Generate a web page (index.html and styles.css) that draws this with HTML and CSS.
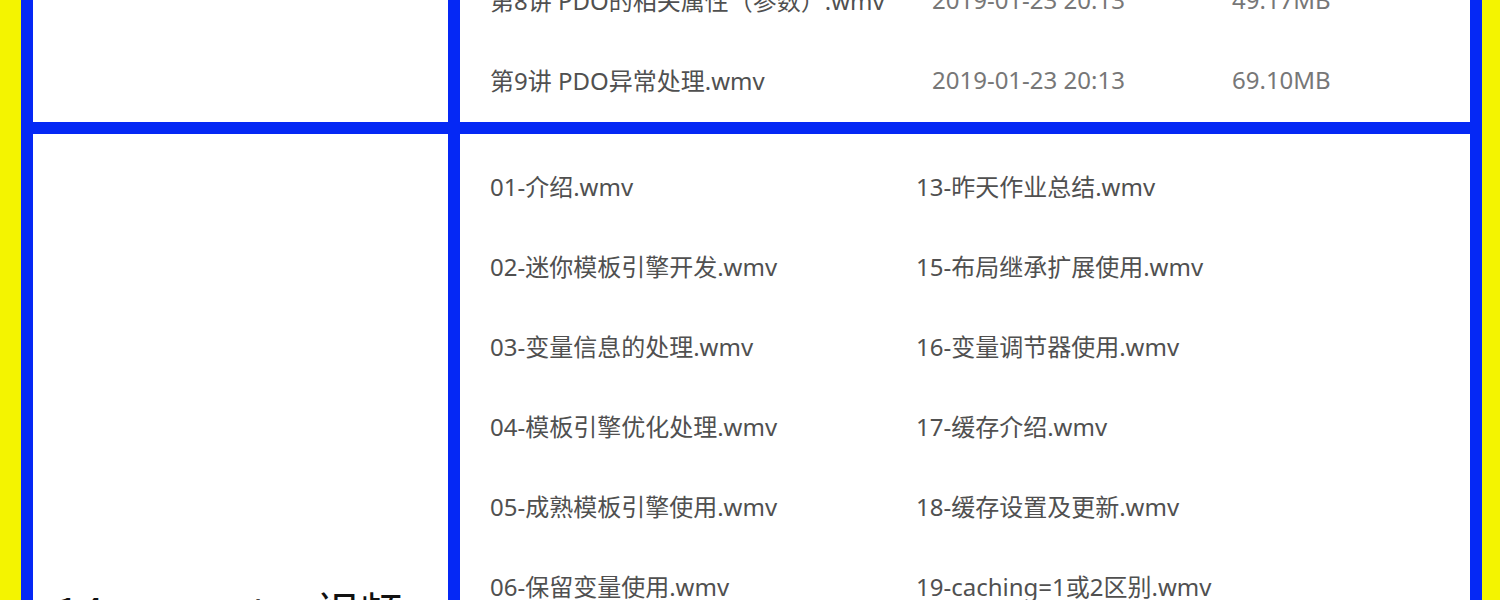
FILE: index.html
```html
<!DOCTYPE html>
<html lang="zh-CN">
<head>
<meta charset="utf-8">
<title>视频目录</title>
<link rel="stylesheet" href="styles.css">
</head>
<body>
<div class="page">
  <div class="sheet">
    <div class="cell label-cell"></div>
    <div class="cell files upper">
      <div class="file-row">
        <span class="name">第8讲 PDO的相关属性（参数）.wmv</span>
        <span class="date">2019-01-23 20:13</span>
        <span class="size">49.17MB</span>
      </div>
      <div class="file-row">
        <span class="name">第9讲 PDO异常处理.wmv</span>
        <span class="date">2019-01-23 20:13</span>
        <span class="size">69.10MB</span>
      </div>
    </div>

    <div class="cell label-cell lower-label">
      <span class="label">14、smarty 视频</span>
    </div>
    <div class="cell files lower">
      <div class="pair-row"><span class="name">01-介绍.wmv</span><span class="name">13-昨天作业总结.wmv</span></div>
      <div class="pair-row"><span class="name">02-迷你模板引擎开发.wmv</span><span class="name">15-布局继承扩展使用.wmv</span></div>
      <div class="pair-row"><span class="name">03-变量信息的处理.wmv</span><span class="name">16-变量调节器使用.wmv</span></div>
      <div class="pair-row"><span class="name">04-模板引擎优化处理.wmv</span><span class="name">17-缓存介绍.wmv</span></div>
      <div class="pair-row"><span class="name">05-成熟模板引擎使用.wmv</span><span class="name">18-缓存设置及更新.wmv</span></div>
      <div class="pair-row"><span class="name">06-保留变量使用.wmv</span><span class="name">19-caching=1或2区别.wmv</span></div>
    </div>
  </div>
</div>
</body>
</html>
```

FILE: styles.css
```css
html, body {
  margin: 0;
  padding: 0;
  background: #f4f400;
  overflow: hidden;
}

.page {
  height: 600px;
  overflow: hidden;
  padding: 0 18px 0 21px;
}

.sheet {
  margin-top: -50px;
  display: grid;
  grid-template-columns: 415px 1010px;
  gap: 12px;
  padding: 12px;
  background: #0528f5;
  font-family: "Noto Sans", "Noto Sans CJK SC", sans-serif;
}

.cell {
  background: #ffffff;
}

.files {
  padding-left: 30px;
}

.file-row,
.pair-row {
  box-sizing: border-box;
  height: 80px;
  padding-bottom: 5px;
  align-items: center;
  font-size: 24px;
}

.file-row {
  display: grid;
  grid-template-columns: 442px 300px auto;
}

.lower {
  padding-top: 14px;
  padding-bottom: 14px;
}

.pair-row {
  display: grid;
  grid-template-columns: 426px auto;
}

.name {
  color: #505050;
  white-space: nowrap;
}

.date,
.size {
  color: #777777;
  white-space: nowrap;
}

.lower-label {
  padding: 451px 0 0 22px;
}

.label {
  display: block;
  font-family: "Noto Sans CJK SC", sans-serif;
  font-size: 44px;
  line-height: 1.2;
  color: #111111;
  word-spacing: 14px;
  white-space: nowrap;
}
```
